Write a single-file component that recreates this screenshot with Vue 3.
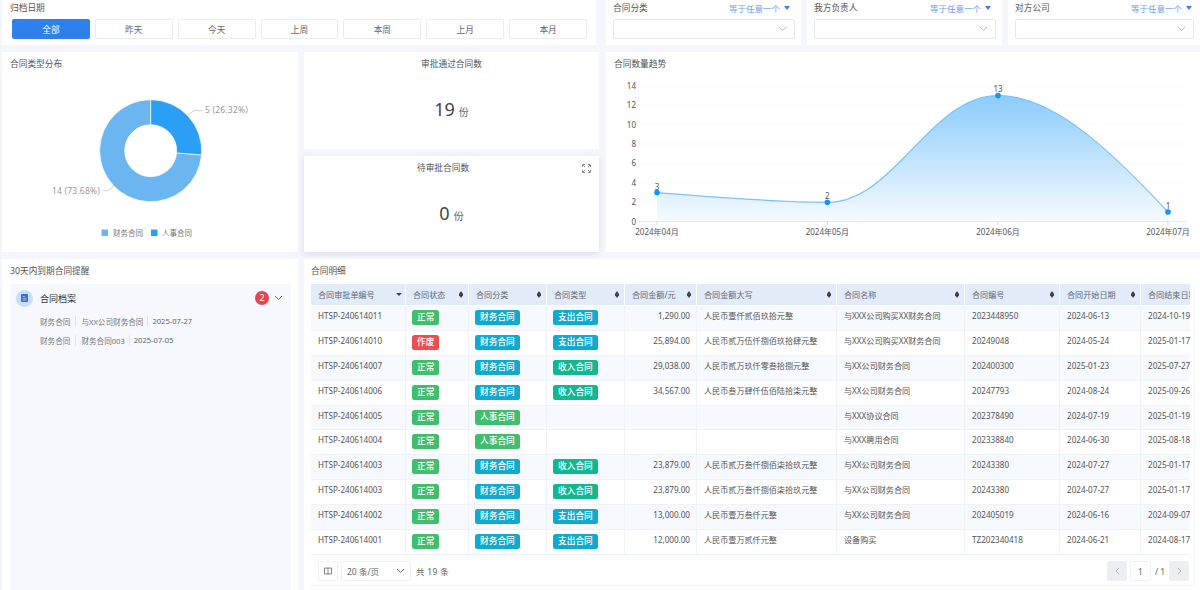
<template>
  <div class="page">
    <div class="row top">
      <section class="card date-card">
        <div class="label">归档日期</div>
        <div class="date-btns">
          <button v-for="(d, i) in dates" :key="d" class="date-btn" :class="{ on: i === 0 }">{{ d }}</button>
        </div>
      </section>
      <section v-for="f in filters" :key="f" class="card filter-card">
        <div class="filter-head">
          <span class="label">{{ f }}</span>
          <span class="op">等于任意一个<i class="caret"></i></span>
        </div>
        <div class="select">
          <svg width="9" height="6" viewBox="0 0 9 6"><path d="M1 1l3.5 3.5L8 1" fill="none" stroke="#9fc2ef" stroke-width="1" /></svg>
        </div>
      </section>
    </div>

    <div class="row middle">
      <section class="card pie-card">
        <div class="label title">合同类型分布</div>
        <svg class="chart" width="296" height="176" viewBox="2 76 296 176">
          <path d="M201.5 154.9A51 51 0 1 1 150.7 99.7L150.7 124.7A26 26 0 1 0 176.6 152.9Z" fill="#6bb5f0" stroke="#fff" stroke-width=".7" />
          <path d="M150.7 99.7A51 51 0 0 1 201.5 154.9L176.6 152.9A26 26 0 0 0 150.7 124.7Z" fill="#2b9ff5" stroke="#fff" stroke-width=".7" />
          <path d="M188 115L194 110.7H202.7M114 186L108 190.7H102.7" fill="none" stroke="#bbb" stroke-width=".7" />
          <text x="205" y="113" class="pie-text">5 (26.32%)</text>
          <text x="100" y="193.5" class="pie-text" text-anchor="end">14 (73.68%)</text>
          <rect x="101.5" y="229.5" width="6.5" height="6.5" fill="#6bb5f0" />
          <text x="113" y="235.5" class="legend">财务合同</text>
          <rect x="151" y="229.5" width="6.5" height="6.5" fill="#2b9ff5" />
          <text x="162" y="235.5" class="legend">人事合同</text>
        </svg>
      </section>

      <div class="stats">
        <section class="card stat">
          <div class="label">审批通过合同数</div>
          <div class="stat-value">19<small>份</small></div>
        </section>
        <section class="card stat raised">
          <div class="label offset">待审批合同数</div>
          <div class="stat-value">0<small>份</small></div>
          <svg class="expand" width="9" height="9" viewBox="0 0 9 9">
            <path d="M.5 3V.5H3M6 .5H8.500V3M8.500 6V8.500H6M3 8.500H.5V6M1 1L3 3M8 1L6 3M8 8L6 6M1 8L3 6" fill="none" stroke="#7d8794" stroke-width=".9" />
          </svg>
        </section>
      </div>

      <section class="card trend-card">
        <div class="label title">合同数量趋势</div>
        <svg class="chart" width="594" height="176" viewBox="606 76 594 176">
          <defs>
            <linearGradient id="area" gradientUnits="userSpaceOnUse" x1="0" y1="95" x2="0" y2="222">
              <stop offset="0" stop-color="#8accfb" />
              <stop offset="1" stop-color="#f7fbff" />
            </linearGradient>
          </defs>
          <g v-for="t in ticks" :key="t">
            <line v-if="t > 0" x1="638" x2="1187" :y1="yOf(t)" :y2="yOf(t)" class="grid" />
            <text x="636" :y="yOf(t) + 3" text-anchor="end" class="axis">{{ t }}</text>
          </g>
          <path :d="curve + 'V221.700H657Z'" fill="url(#area)" />
          <path :d="curve" fill="none" stroke="#7cc2fb" stroke-width="1.200" />
          <line x1="638" x2="1187" y1="221.700" y2="221.700" stroke="#e8e8e8" />
          <g v-for="p in points" :key="p.label">
            <line :x1="p.x" :x2="p.x" y1="221.700" y2="225" stroke="#ccc" stroke-width=".7" />
            <circle :cx="p.x" :cy="yOf(p.v)" r="2.800" fill="#1393fb" />
            <text :x="p.x" :y="yOf(p.v) - 3" text-anchor="middle" class="axis">{{ p.v }}</text>
            <text :x="p.x" y="234.500" text-anchor="middle" class="axis">{{ p.label }}</text>
          </g>
        </svg>
      </section>
    </div>

    <div class="row bottom">
      <section class="card remind-card">
        <div class="label">30天内到期合同提醒</div>
        <div class="remind-panel">
          <div class="remind-head">
            <span class="doc-icon">
              <svg width="7" height="8" viewBox="0 0 7 8">
                <rect width="7" height="8" rx=".8" fill="#3f6fc4" />
                <path d="M1.500 2.500H4M1.500 4.500H5.500M1.500 6H5.500" stroke="#cfe2fb" stroke-width=".6" />
              </svg>
            </span>
            <span class="remind-name">合同档案</span>
            <span class="badge">2</span>
            <svg width="9" height="6" viewBox="0 0 9 6"><path d="M1 1l3.500 3.500L8 1" fill="none" stroke="#777" stroke-width="1" /></svg>
          </div>
          <div v-for="r in reminders" :key="r[1]" class="remind-line">
            <span v-for="c in r" :key="c">{{ c }}</span>
          </div>
        </div>
      </section>

      <section class="card detail-card">
        <div class="label">合同明细</div>
        <div class="table-box">
          <div class="table-clip">
            <table>
              <colgroup>
                <col v-for="c in columns" :key="c.name" :style="{ width: c.width + 'px' }" />
              </colgroup>
              <thead>
                <tr>
                  <th v-for="(c, i) in columns" :key="c.name">
                    <div class="th-in">
                      <span>{{ c.name }}</span>
                      <i v-if="i === 0" class="sort-down"></i>
                      <i v-else-if="i < columns.length - 1" class="sort"></i>
                    </div>
                  </th>
                </tr>
              </thead>
              <tbody>
                <tr v-for="(r, i) in rows" :key="i">
                  <td>{{ r.no }}</td>
                  <td><span class="tag" :class="r.status === '作废' ? 'red' : 'green'">{{ r.status }}</span></td>
                  <td><span class="tag" :class="r.cat === '人事合同' ? 'green' : 'cyan'">{{ r.cat }}</span></td>
                  <td><span v-if="r.type" class="tag" :class="r.type === '收入合同' ? 'teal' : 'cyan'">{{ r.type }}</span></td>
                  <td class="num">{{ r.amount }}</td>
                  <td>{{ r.upper }}</td>
                  <td>{{ r.name }}</td>
                  <td>{{ r.code }}</td>
                  <td>{{ r.start }}</td>
                  <td>{{ r.end }}</td>
                </tr>
              </tbody>
            </table>
          </div>
          <div class="pager">
            <span class="pg-btn">
              <svg width="8" height="8" viewBox="0 0 8 8"><path d="M.5 1h7v6h-7zM4 1v6" fill="none" stroke="#666" stroke-width=".8" /></svg>
            </span>
            <span class="pg-size">20 条/页
              <svg width="9" height="6" viewBox="0 0 9 6"><path d="M1 1l3.500 3.500L8 1" fill="none" stroke="#666" stroke-width="1" /></svg>
            </span>
            <span class="pg-total">共 19 条</span>
            <span class="pg-right">
              <span class="pg-btn off">
                <svg width="5" height="8" viewBox="0 0 5 8"><path d="M4 1L1 4l3 3" fill="none" stroke="#b5bac2" stroke-width="1" /></svg>
              </span>
              <span class="pg-input">1</span>
              <span class="pg-of">/ 1</span>
              <span class="pg-btn off">
                <svg width="5" height="8" viewBox="0 0 5 8"><path d="M1 1l3 3-3 3" fill="none" stroke="#b5bac2" stroke-width="1" /></svg>
              </span>
            </span>
          </div>
        </div>
      </section>
    </div>
  </div>
</template>

<script setup>
const dates = ['全部', '昨天', '今天', '上周', '本周', '上月', '本月']
const filters = ['合同分类', '我方负责人', '对方公司']
const ticks = [0, 2, 4, 6, 8, 10, 12, 14]
const yOf = (v) => 221.7 - v * 9.71

const points = [
  { x: 657, v: 3, label: '2024年04月' },
  { x: 827.4, v: 2, label: '2024年05月' },
  { x: 998, v: 13, label: '2024年06月' },
  { x: 1168, v: 1, label: '2024年07月' },
]
const curve = 'M657 192.6C715 197 770 202.3 827.4 202.3C895 202.3 930 95.5 998 95.5C1055 95.5 1115 155 1168 212'

const reminders = [
  ['财务合同', '与XX公司财务合同', '2025-07-27'],
  ['财务合同', '财务合同003', '2025-07-05'],
]

const columns = [
  { name: '合同审批单编号', width: 95 },
  { name: '合同状态', width: 63 },
  { name: '合同分类', width: 78 },
  { name: '合同类型', width: 78 },
  { name: '合同金额/元', width: 72 },
  { name: '合同金额大写', width: 140 },
  { name: '合同名称', width: 128 },
  { name: '合同编号', width: 95 },
  { name: '合同开始日期', width: 81 },
  { name: '合同结束日期', width: 60 },
]

const rows = [
  { no: 'HTSP-240614011', status: '正常', cat: '财务合同', type: '支出合同', amount: '1,290.00', upper: '人民币壹仟贰佰玖拾元整', name: '与XXX公司购买XX财务合同', code: '2023448950', start: '2024-06-13', end: '2024-10-19' },
  { no: 'HTSP-240614010', status: '作废', cat: '财务合同', type: '支出合同', amount: '25,894.00', upper: '人民币贰万伍仟捌佰玖拾肆元整', name: '与XXX公司购买XX财务合同', code: '20249048', start: '2024-05-24', end: '2025-01-17' },
  { no: 'HTSP-240614007', status: '正常', cat: '财务合同', type: '收入合同', amount: '29,038.00', upper: '人民币贰万玖仟零叁拾捌元整', name: '与XX公司财务合同', code: '202400300', start: '2025-01-23', end: '2025-07-27' },
  { no: 'HTSP-240614006', status: '正常', cat: '财务合同', type: '收入合同', amount: '34,567.00', upper: '人民币叁万肆仟伍佰陆拾柒元整', name: '与XX公司财务合同', code: '20247793', start: '2024-08-24', end: '2025-09-26' },
  { no: 'HTSP-240614005', status: '正常', cat: '人事合同', type: '', amount: '', upper: '', name: '与XXX协议合同', code: '202378490', start: '2024-07-19', end: '2025-01-19' },
  { no: 'HTSP-240614004', status: '正常', cat: '人事合同', type: '', amount: '', upper: '', name: '与XXX聘用合同', code: '202338840', start: '2024-06-30', end: '2025-08-18' },
  { no: 'HTSP-240614003', status: '正常', cat: '财务合同', type: '收入合同', amount: '23,879.00', upper: '人民币贰万叁仟捌佰柒拾玖元整', name: '与XX公司财务合同', code: '20243380', start: '2024-07-27', end: '2025-01-17' },
  { no: 'HTSP-240614003', status: '正常', cat: '财务合同', type: '收入合同', amount: '23,879.00', upper: '人民币贰万叁仟捌佰柒拾玖元整', name: '与XX公司财务合同', code: '20243380', start: '2024-07-27', end: '2025-01-17' },
  { no: 'HTSP-240614002', status: '正常', cat: '财务合同', type: '支出合同', amount: '13,000.00', upper: '人民币壹万叁仟元整', name: '与XX公司财务合同', code: '202405019', start: '2024-06-16', end: '2024-09-07' },
  { no: 'HTSP-240614001', status: '正常', cat: '财务合同', type: '支出合同', amount: '12,000.00', upper: '人民币壹万贰仟元整', name: '设备购买', code: 'TZ202340418', start: '2024-06-21', end: '2024-08-17' },
]
</script>

<style>
html, body {
  margin: 0;
  background: #f4f6fb;
}
</style>

<style scoped>
.page {
  width: 1200px;
  height: 590px;
  overflow: hidden;
  padding-left: 2px;
  box-sizing: border-box;
  background: #f4f6fb;
  font-family: "Noto Sans", "Noto Sans CJK SC", sans-serif;
  font-size: 8.500px;
  color: #555;
  display: flex;
  flex-direction: column;
  gap: 7px;
}

.row {
  display: flex;
  flex: none;
}

.top { height: 45px; gap: 6px; }
.middle { height: 200px; gap: 6px; }
.bottom { height: 331px; gap: 6px; }

.card {
  background: #fff;
  box-sizing: border-box;
}

.label {
  font-size: 8.700px;
  line-height: 12px;
  color: #555;
}

.date-card {
  width: 594px;
  margin-right: 4px;
  padding: 2px 9px 0 8px;
}

.date-btns {
  display: flex;
  gap: 5px;
  margin-top: 5px;
  padding-left: 2px;
}

.date-btn {
  width: 78px;
  height: 20px;
  padding: 0;
  border: 1px solid #eaecf0;
  border-radius: 2px;
  background: #fff;
  color: #666;
  font: inherit;
  font-size: 8.700px;
}

.date-btn.on {
  background: #2f80ed;
  border-color: #2f80ed;
  color: #fff;
}

.filter-card {
  width: 195px;
  padding: 2px 6px 0 7px;
}

.filter-card:last-child {
  width: 192px;
}

.filter-head {
  display: flex;
  justify-content: space-between;
  align-items: center;
  padding-right: 5px;
}

.filter-card:last-child .filter-head {
  padding-right: 2px;
}

.op {
  color: #6f9df5;
  display: flex;
  align-items: center;
  gap: 4px;
}

.caret {
  border-left: 3px solid transparent;
  border-right: 3px solid transparent;
  border-top: 4px solid #3f7de8;
}

.select {
  height: 20px;
  margin-top: 5px;
  border: 1px solid #e6e8ec;
  border-radius: 2px;
  box-sizing: border-box;
  display: flex;
  align-items: center;
  justify-content: flex-end;
  padding-right: 7px;
}

.title {
  padding: 6px 0 6px 8px;
}

.pie-card {
  width: 296px;
}

.chart {
  display: block;
}

.pie-text {
  font-size: 8.500px;
  fill: #999;
  letter-spacing: .2px;
}

.legend {
  font-size: 7.500px;
  fill: #777;
}

.stats {
  width: 295px;
  display: flex;
  flex-direction: column;
  gap: 7px;
}

.stat {
  flex: 1;
  position: relative;
  text-align: center;
  padding-top: 6px;
}

.stat.raised {
  box-shadow: 0 2px 6px rgba(120, 130, 170, .2);
}

.offset {
  padding-right: 17px;
}

.stat-value {
  margin-top: 27px;
  font-size: 18px;
  line-height: 24px;
  color: #444;
}

.stat-value small {
  font-size: 10px;
  margin-left: 4px;
  color: #666;
}

.expand {
  position: absolute;
  top: 8px;
  right: 8px;
}

.trend-card {
  flex: 1;
  margin-left: 1px;
}

.grid {
  stroke: #f0f0f0;
  stroke-width: .7;
  stroke-dasharray: 2 2;
}

.axis {
  font-size: 8px;
  fill: #555;
}

.remind-card {
  width: 296px;
  padding: 6px 7px 0 8px;
}

.remind-panel {
  height: 306px;
  margin-top: 7px;
  background: #f6f8fe;
  border-radius: 3px;
  padding: 5px 8px 0 6px;
}

.remind-head {
  display: flex;
  align-items: center;
  height: 18px;
}

.doc-icon {
  width: 17px;
  height: 17px;
  border-radius: 50%;
  background: #c5dffc;
  display: flex;
  align-items: center;
  justify-content: center;
}

.remind-name {
  margin-left: 7px;
  flex: 1;
  font-size: 9px;
  color: #333;
}

.badge {
  width: 14px;
  height: 14px;
  border-radius: 50%;
  background: #e8434a;
  color: #fff;
  font-size: 9px;
  line-height: 14px;
  text-align: center;
  margin-right: 5px;
}

.remind-line {
  display: flex;
  align-items: center;
  margin: 5px 0 0 24px;
  height: 14px;
  font-size: 7.600px;
  color: #777;
}

.remind-head + .remind-line {
  margin-top: 7px;
}

.remind-line span + span {
  margin-left: 5px;
  padding-left: 5px;
  border-left: 1px solid #e3e5ea;
}

.remind-line span:last-child {
  color: #666;
  margin-left: 4px;
  padding-left: 4px;
}

.detail-card {
  flex: 1;
  padding: 6px 5px 0 7px;
}

.table-box {
  margin-top: 7px;
  width: 884px;
  height: 302px;
  box-sizing: border-box;
  border-bottom: 1px solid #f0f4fa;
  border-right: 1px solid #f4f6fa;
}

.table-clip {
  width: 879px;
  height: 271px;
  overflow: hidden;
}

table {
  border-collapse: separate;
  border-spacing: 0;
  table-layout: fixed;
  width: 890px;
}

th {
  height: 21px;
  padding: 0;
  background: #e2ecf8;
  border-right: 1px solid #fff;
  border-bottom: 1px solid #fff;
  font-weight: 400;
  text-align: left;
  color: #667;
  font-size: 8.100px;
}

.th-in {
  display: flex;
  align-items: center;
  justify-content: space-between;
  padding: 0 5px 0 7px;
  white-space: nowrap;
}

.sort {
  width: 4px;
  height: 7px;
  background: #444;
  border-radius: 2px;
  clip-path: polygon(50% 0, 100% 40%, 100% 60%, 50% 100%, 0 60%, 0 40%);
}

.sort-down {
  margin-right: -2px;
  border-left: 3px solid transparent;
  border-right: 3px solid transparent;
  border-top: 3px solid #444;
}

td {
  height: 24.900px;
  padding: 3px 6px 0;
  box-sizing: border-box;
  border-right: 1px solid #eef3fb;
  border-bottom: 1px solid #eef3fb;
  white-space: nowrap;
  overflow: hidden;
  color: #555;
  font-size: 8.100px;
  line-height: 14px;
  vertical-align: top;
}

td:first-child,
td:nth-child(6),
td:nth-child(7),
td:nth-child(8),
td:nth-child(9),
td:nth-child(10) {
  padding-left: 7px;
}

tbody tr:nth-child(odd) td {
  background: #f6f9fd;
}

.num {
  text-align: right;
}

.tag {
  display: inline-block;
  height: 15px;
  line-height: 15px;
  padding: 0 5px;
  border-radius: 2.500px;
  color: #fff;
  font-size: 8.700px;
  font-weight: 500;
  vertical-align: top;
  margin-top: 1px;
}

.green { background: #3fbf6c; }
.cyan { background: #0eaad0; }
.teal { background: #0fb88f; }
.red { background: #ee4c50; }

.pager {
  height: 30px;
  box-sizing: border-box;
  display: flex;
  align-items: center;
  padding: 2px 5px 0 7px;
  color: #666;
}

.pg-btn {
  width: 20px;
  height: 20px;
  box-sizing: border-box;
  border: 1px solid #eef0f4;
  border-radius: 2px;
  display: flex;
  align-items: center;
  justify-content: center;
}

.pg-btn.off {
  background: #eceef2;
}

.pg-size {
  width: 70px;
  height: 20px;
  margin-left: 3px;
  box-sizing: border-box;
  border: 1px solid #eef0f4;
  border-radius: 2px;
  padding: 0 5px;
  display: flex;
  align-items: center;
  justify-content: space-between;
}

.pg-total {
  margin-left: 5px;
  letter-spacing: .3px;
}

.pg-right {
  margin-left: auto;
  display: flex;
  align-items: center;
}

.pg-input {
  width: 21px;
  height: 20px;
  margin-left: 3px;
  box-sizing: border-box;
  border: 1px solid #eef0f4;
  border-radius: 2px;
  text-align: center;
  line-height: 19px;
}

.pg-of {
  width: 18px;
  text-align: center;
}
</style>
